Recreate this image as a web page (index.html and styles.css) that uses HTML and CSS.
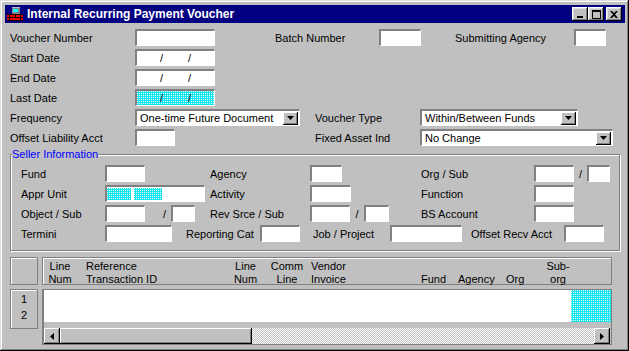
FILE: index.html
```html
<!DOCTYPE html>
<html lang="en">
<head>
    <meta charset="UTF-8">
    <title>Internal Recurring Payment Voucher</title>
    <link rel="stylesheet" href="styles.css">
</head>
<body>
    <svg class="defs" width="0" height="0">
        <defs>
            <pattern id="cyan-dots" width="2" height="2" patternUnits="userSpaceOnUse">
                <rect width="2" height="2" fill="#10e4f0"/>
                <rect width="1" height="1" fill="#e8fff8"/>
            </pattern>
        </defs>
    </svg>
    <div class="window">
        <div class="titlebar">
            <svg class="app-icon" width="16" height="16" viewBox="0 0 16 16" shape-rendering="crispEdges">
                <rect x="5" y="1" width="8" height="7" fill="#808080"/>
                <rect x="5" y="1" width="8" height="1" fill="#c0c0c0"/>
                <rect x="6" y="3" width="5" height="3" fill="#00ffff"/>
                <rect x="0" y="8" width="16" height="7" fill="#ff0000"/>
                <rect x="0" y="8" width="16" height="1" fill="#000"/>
                <rect x="0" y="11" width="16" height="1" fill="#000"/>
                <rect x="0" y="14" width="16" height="1" fill="#000"/>
                <rect x="2" y="9" width="1" height="6" fill="#000"/>
                <rect x="8" y="9" width="1" height="2" fill="#000"/>
                <rect x="13" y="9" width="1" height="6" fill="#000"/>
            </svg>
            <span class="title">Internal Recurring Payment Voucher</span>
            <div class="caption-btns">
                <span class="cbtn"><svg width="8" height="8" viewBox="0 0 8 8"><rect x="1" y="6" width="6" height="2" fill="#000"/></svg></span>
                <span class="cbtn"><svg width="9" height="9" viewBox="0 0 9 9"><rect x="0.5" y="0.5" width="8" height="8" fill="none" stroke="#000"/><rect x="0" y="0" width="9" height="2" fill="#000"/></svg></span>
                <span class="cbtn close"><svg width="8" height="7" viewBox="0 0 8 7"><path d="M0 0h2l2 2 2-2h2l-3 3.5 3 3.5h-2l-2-2-2 2h-2l3-3.5z" fill="#000"/></svg></span>
            </div>
        </div>

        <div class="form">
            <div class="top">
                <div class="row">
                    <span class="lbl w125">Voucher Number</span>
                    <span class="field w80"></span>
                    <span class="lbl ml60 w104">Batch Number</span>
                    <span class="field w42"></span>
                    <span class="lbl ml34 w119">Submitting Agency</span>
                    <span class="field w32"></span>
                </div>
                <div class="row">
                    <span class="lbl w125">Start Date</span>
                    <span class="field date w80"><span>/</span><span>/</span></span>
                </div>
                <div class="row">
                    <span class="lbl w125">End Date</span>
                    <span class="field date w80"><span>/</span><span>/</span></span>
                </div>
                <div class="row">
                    <span class="lbl w125">Last Date</span>
                    <span class="field stack w80">
                        <svg class="dith"><rect width="100%" height="100%" fill="url(#cyan-dots)"/></svg>
                        <span class="date"><span>/</span><span>/</span></span>
                    </span>
                </div>
                <div class="row">
                    <span class="lbl w125">Frequency</span>
                    <span class="field select w165">
                        <span>One-time Future Document</span>
                        <span class="drop"><svg width="7" height="4" viewBox="0 0 7 4"><path d="M0 0h7l-3.5 4z" fill="#000"/></svg></span>
                    </span>
                    <span class="lbl ml15 w105">Voucher Type</span>
                    <span class="field select w158">
                        <span>Within/Between Funds</span>
                        <span class="drop"><svg width="7" height="4" viewBox="0 0 7 4"><path d="M0 0h7l-3.5 4z" fill="#000"/></svg></span>
                    </span>
                </div>
                <div class="row">
                    <span class="lbl w125">Offset Liability Acct</span>
                    <span class="field w40"></span>
                    <span class="lbl ml140 w105">Fixed Asset Ind</span>
                    <span class="field select w193">
                        <span>No Change</span>
                        <span class="drop"><svg width="7" height="4" viewBox="0 0 7 4"><path d="M0 0h7l-3.5 4z" fill="#000"/></svg></span>
                    </span>
                </div>
            </div>

            <fieldset class="group">
                <legend>Seller Information</legend>
                <div class="row">
                    <span class="lbl w84">Fund</span>
                    <span class="field w40"></span>
                    <span class="lbl ml65 w100">Agency</span>
                    <span class="field w32"></span>
                    <span class="lbl ml79 w113">Org / Sub</span>
                    <span class="field w40"></span>
                    <span class="slash w13">/</span>
                    <span class="field w23"></span>
                </div>
                <div class="row">
                    <span class="lbl w84">Appr Unit</span>
                    <span class="field appr w100">
                        <svg class="dith d24"><rect width="100%" height="100%" fill="url(#cyan-dots)"/></svg>
                        <svg class="dith d28"><rect width="100%" height="100%" fill="url(#cyan-dots)"/></svg>
                    </span>
                    <span class="lbl ml5 w100">Activity</span>
                    <span class="field w41"></span>
                    <span class="lbl ml70 w113">Function</span>
                    <span class="field w40"></span>
                </div>
                <div class="row">
                    <span class="lbl w84">Object / Sub</span>
                    <span class="field w40"></span>
                    <span class="slash right w26">/</span>
                    <span class="field w24"></span>
                    <span class="lbl ml15 w100">Rev Srce / Sub</span>
                    <span class="field w40"></span>
                    <span class="slash w14">/</span>
                    <span class="field w25"></span>
                    <span class="lbl ml32 w113">BS Account</span>
                    <span class="field w40"></span>
                </div>
                <div class="row">
                    <span class="lbl w84">Termini</span>
                    <span class="field w67"></span>
                    <span class="lbl ml14 w74">Reporting Cat</span>
                    <span class="field w40"></span>
                    <span class="lbl ml13 w77">Job / Project</span>
                    <span class="field w72"></span>
                    <span class="lbl ml9 w93">Offset Recv Acct</span>
                    <span class="field w40"></span>
                </div>
            </fieldset>

            <div class="grid">
                <div class="corner"></div>
                <div class="grid-head">
                    <div class="col c1">Line<br>Num</div>
                    <div class="col c2">Reference<br>Transaction ID</div>
                    <div class="col c3">Line<br>Num</div>
                    <div class="col c4">Comm<br>Line</div>
                    <div class="col c5">Vendor<br>Invoice</div>
                    <div class="col c6">&nbsp;<br>Fund</div>
                    <div class="col c7">&nbsp;<br>Agency</div>
                    <div class="col c8">&nbsp;<br>Org</div>
                    <div class="col c9">Sub-<br>org</div>
                </div>
                <div class="row-nums">1<br>2</div>
                <div class="grid-body">
                    <div class="cells">
                        <div class="blank"></div>
                        <svg class="dith fill"><rect width="100%" height="100%" fill="url(#cyan-dots)"/></svg>
                    </div>
                    <div class="hscroll">
                        <span class="sbtn"><svg width="4" height="7" viewBox="0 0 4 7"><path d="M4 0v7l-4-3.5z" fill="#000"/></svg></span>
                        <span class="thumb"></span>
                        <span class="track"></span>
                        <span class="sbtn"><svg width="4" height="7" viewBox="0 0 4 7"><path d="M0 0v7l4-3.5z" fill="#000"/></svg></span>
                    </div>
                </div>
            </div>
        </div>
    </div>
</body>
</html>
```

FILE: styles.css
```css
body {
    margin: 0;
    font-family: "Liberation Sans", Arial, sans-serif;
    font-size: 11px;
    color: #000;
    background-color: #c0c0c0;
}
.defs {
    display: block;
}
.window {
    width: 629px;
    height: 351px;
    box-sizing: border-box;
    padding: 5px 4px 4px 5px;
    background-color: #c0c0c0;
    box-shadow: inset -1px -1px #000, inset 1px 1px #dfdfdf, inset -2px -2px #808080, inset 2px 2px #fff;
    overflow: hidden;
}
.titlebar {
    height: 18px;
    background-color: #000080;
    display: flex;
    align-items: center;
    color: #fff;
}
.app-icon {
    margin-left: 2px;
    flex: none;
}
.title {
    margin-left: 4px;
    font-weight: bold;
    font-size: 12px;
    flex: 1;
}
.caption-btns {
    display: flex;
    margin-right: 3px;
}
.cbtn {
    width: 16px;
    height: 14px;
    box-sizing: border-box;
    background-color: #c0c0c0;
    box-shadow: inset -1px -1px #000, inset 1px 1px #fff, inset -2px -2px #808080, inset 2px 2px #dfdfdf;
    display: flex;
    align-items: center;
    justify-content: center;
}
.cbtn.close {
    margin-left: 2px;
}

.form {
    padding: 6px 0 0 5px;
}
.top {
    display: flex;
    flex-direction: column;
    gap: 3px;
}
.row {
    display: flex;
    align-items: center;
    height: 17px;
}
.lbl {
    white-space: nowrap;
    flex: none;
}
.field {
    flex: none;
    height: 17px;
    box-sizing: border-box;
    background-color: #fff;
    border-style: solid;
    border-width: 2px 1px 1px 2px;
    border-color: #808080 #fff #fff #808080;
}
.date {
    display: flex;
    align-items: center;
    padding-left: 23px;
}
.date span + span {
    margin-left: 25px;
}
.stack {
    display: grid;
}
.stack > * {
    grid-area: 1 / 1;
}
.dith {
    display: block;
    width: 100%;
    height: 100%;
}
.select {
    display: flex;
    align-items: center;
    justify-content: space-between;
    padding-left: 3px;
    white-space: nowrap;
}
.drop {
    width: 15px;
    height: 13px;
    box-sizing: border-box;
    margin-right: 1px;
    background-color: #c0c0c0;
    box-shadow: inset -1px -1px #000, inset 1px 1px #fff, inset -2px -2px #808080;
    display: flex;
    align-items: center;
    justify-content: center;
}
.slash {
    flex: none;
    text-align: center;
}
.slash.right {
    text-align: right;
    padding-right: 5px;
    box-sizing: border-box;
}
.appr {
    display: flex;
    gap: 3px;
    padding: 1px 0;
}
.appr .d24 { width: 24px; }
.appr .d28 { width: 28px; }

.w13 { width: 13px; }
.w14 { width: 14px; }
.w23 { width: 23px; }
.w24 { width: 24px; }
.w25 { width: 25px; }
.w26 { width: 26px; }
.w32 { width: 32px; }
.w40 { width: 40px; }
.w41 { width: 41px; }
.w42 { width: 42px; }
.w67 { width: 67px; }
.w72 { width: 72px; }
.w74 { width: 74px; }
.w77 { width: 77px; }
.w80 { width: 80px; }
.w84 { width: 84px; }
.w93 { width: 93px; }
.w100 { width: 100px; }
.w104 { width: 104px; }
.w105 { width: 105px; }
.w113 { width: 113px; }
.w119 { width: 119px; }
.w125 { width: 125px; }
.w158 { width: 158px; }
.w165 { width: 165px; }
.w193 { width: 193px; }
.ml5 { margin-left: 5px; }
.ml9 { margin-left: 9px; }
.ml13 { margin-left: 13px; }
.ml14 { margin-left: 14px; }
.ml15 { margin-left: 15px; }
.ml32 { margin-left: 32px; }
.ml34 { margin-left: 34px; }
.ml60 { margin-left: 60px; }
.ml65 { margin-left: 65px; }
.ml70 { margin-left: 70px; }
.ml79 { margin-left: 79px; }
.ml140 { margin-left: 140px; }

.group {
    width: 610px;
    box-sizing: border-box;
    margin: 2px 0 0 0;
    padding: 4px 0 8px 10px;
    border: 1px solid #808080;
    box-shadow: inset 1px 1px #fff, 1px 1px #fff;
    display: flex;
    flex-direction: column;
    gap: 3px;
}
.group legend {
    padding: 0;
    margin-left: -9px;
    color: #0000ff;
    line-height: 13px;
    background-color: #c0c0c0;
}

.grid {
    margin-top: 6px;
    display: grid;
    grid-template-columns: 28px 570px;
    grid-template-rows: 28px 56px;
    gap: 4px;
}
.corner, .grid-head, .row-nums {
    box-sizing: border-box;
    border: 1px solid #808080;
    box-shadow: inset 1px 1px #fff;
}
.grid-head {
    display: flex;
    padding-top: 2px;
    line-height: 13px;
    white-space: nowrap;
}
.col { flex: none; }
.c1 { width: 34px; text-align: center; }
.c2 { width: 140px; padding-left: 9px; }
.c3 { width: 39px; text-align: center; }
.c4 { width: 44px; text-align: center; }
.c5 { width: 89px; padding-left: 2px; }
.c6 { width: 46px; text-align: right; padding-right: 4px; }
.c7 { width: 42px; padding-left: 8px; }
.c8 { width: 24px; padding-left: 6px; }
.c9 { width: 56px; text-align: center; }
.row-nums {
    height: 40px;
    padding-top: 1px;
    line-height: 16px;
    text-align: center;
}
.grid-body {
    box-sizing: border-box;
    border: 1px solid #808080;
    border-left-width: 2px;
    display: flex;
    flex-direction: column;
}
.cells {
    display: flex;
    height: 32px;
    background-color: #fff;
}
.blank {
    flex: 1;
}
.cells .fill {
    width: 40px;
    flex: none;
}
.hscroll {
    display: flex;
    height: 16px;
    margin-top: 6px;
    margin-right: 1px;
}
.sbtn, .thumb {
    flex: none;
    box-sizing: border-box;
    background-color: #c0c0c0;
    box-shadow: inset -1px -1px #000, inset 1px 1px #fff, inset -2px -2px #808080;
}
.sbtn {
    width: 16px;
    display: flex;
    align-items: center;
    justify-content: center;
}
.thumb {
    width: 192px;
}
.track {
    flex: 1;
    background: repeating-conic-gradient(#c0c0c0 0 25%, #fff 0 50%) 0 0 / 2px 2px;
}
```
